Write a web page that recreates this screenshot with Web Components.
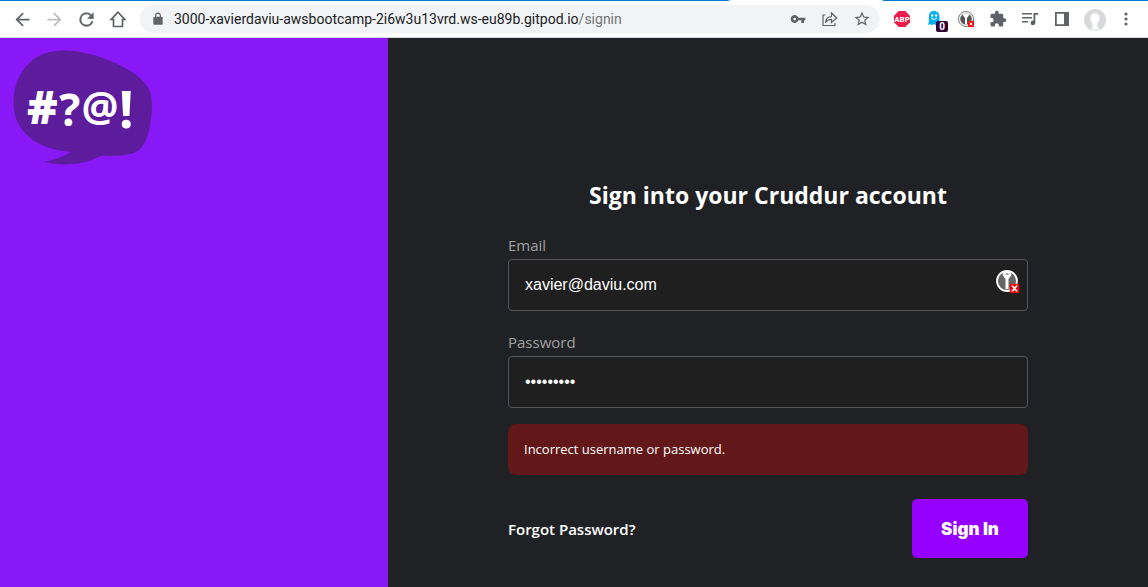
<!DOCTYPE html>
<html lang="en">
<head>
<meta charset="utf-8">
<title>Cruddur</title>
<style>
html, body { height: 100%; }
body { margin: 0; display: flex; flex-direction: column; background: #202124; font-family: "Open Sans", "Noto Sans", sans-serif; }
sign-in-page { flex: 1; }
</style>
</head>
<body>
<browser-bar></browser-bar>
<sign-in-page></sign-in-page>

<template id="bar-template">
<style>
:host { display: block; background: #fff; border-bottom: 1px solid #d9dadd; color: #5f6368; }
.tabline { height: 1px; background: linear-gradient(90deg, #0078d7 0 63.4%, #fff 63.6% 76.8%, #0078d7 77%); }
nav { display: flex; align-items: center; height: 36px; padding: 0 12px; }
.group { display: flex; align-items: center; gap: 12px; }
button { all: unset; display: grid; place-items: center; width: 20px; height: 20px; }
svg { display: block; fill: currentColor; overflow: visible; }
.off { color: #bbbdc0; }
.address { flex: 1; min-width: 0; display: flex; align-items: center; height: 28px; margin: 0 12px; padding: 0 8px; border-radius: 14px; background: #f1f3f4; }
.address > svg { margin: 0 9px 0 3px; }
.url { flex: 1; min-width: 0; white-space: nowrap; overflow: hidden; font-family: Roboto, sans-serif; font-size: 14px; line-height: 20px; color: #202124; }
.url span { color: #70757a; }
</style>
<div class="tabline"></div>
<nav aria-label="Browser">
  <div class="group">
    <button aria-label="Back"><svg width="21" height="21" viewBox="0 0 24 24"><path d="M20 11H7.830l5.590-5.590L12 4l-8 8 8 8 1.410-1.410L7.830 13H20z"/></svg></button>
    <button class="off" aria-label="Forward"><svg width="21" height="21" viewBox="0 0 24 24"><path d="M12 4l-1.410 1.410L16.170 11H4v2h12.170l-5.580 5.590L12 20l8-8z"/></svg></button>
    <button aria-label="Reload"><svg width="21" height="21" viewBox="0 0 24 24"><path d="M17.650 6.350A7.960 7.960 0 0 0 12 4a8 8 0 1 0 7.730 10h-2.080A6 6 0 1 1 12 6c1.660 0 3.140.69 4.220 1.780L13 11h7V4z" stroke="currentColor" stroke-width=".3"/></svg></button>
    <button aria-label="Home"><svg width="20" height="20" viewBox="0 0 20 20"><path d="M10 3.200 3.200 10.500H5.500v7h9v-7h2.300z" fill="none" stroke="currentColor" stroke-width="1.700"/></svg></button>
  </div>
  <div class="address">
    <svg width="14" height="14" viewBox="0 0 24 24"><path d="M18 8h-1V6A5 5 0 0 0 7 6v2H6a2 2 0 0 0-2 2v10c0 1.100.9 2 2 2h12a2 2 0 0 0 2-2V10a2 2 0 0 0-2-2zM9 6a3 3 0 0 1 6 0v2H9z"/></svg>
    <div class="url">3000-xavierdaviu-awsbootcamp-2i6w3u13vrd.ws-eu89b.gitpod.io<span>/signin</span></div>
    <div class="group">
      <button aria-label="Passwords"><svg width="16" height="16" viewBox="0 0 24 24"><path d="M12.650 10A6 6 0 1 0 12.650 14H17v4h4v-4h2v-4zM7 14a2 2 0 1 1 0-4 2 2 0 0 1 0 4z"/></svg></button>
      <button aria-label="Share"><svg width="18" height="18" viewBox="0 0 18 18"><g fill="none" stroke="currentColor" stroke-width="1.200"><path d="M4.500 5H2v10.500h12V13"/><path d="M10.500 6.500V3l5.300 5-5.300 4.500V9.300c-3 0-4.700 1-6 3.400.3-3.500 2.300-6 6-6.200z"/></g></svg></button>
      <button aria-label="Bookmark"><svg width="18" height="18" viewBox="0 0 24 24"><path d="M22 9.240l-7.190-.62L12 2 9.190 8.630 2 9.240l5.460 4.730L5.820 21 12 17.270 18.180 21l-1.630-7.030zM12 15.400l-3.760 2.270 1-4.280-3.320-2.880 4.380-.38L12 6.100l1.710 4.040 4.380.38-3.320 2.880 1 4.280z"/></svg></button>
    </div>
  </div>
  <div class="group">
    <button aria-label="Adblock Plus"><svg width="16" height="16" viewBox="0 0 16 16"><path d="M4.700 0h6.600L16 4.700v6.600L11.300 16H4.700L0 11.300V4.700z" fill="#ee1c4e"/><text x="8" y="11" text-anchor="middle" font-family="Roboto, sans-serif" font-size="8" font-weight="700" fill="#fff">ABP</text></svg></button>
    <button aria-label="Ghostery"><svg width="20" height="20" viewBox="0 0 20 20"><path d="M10 2c3.500 0 5.500 2.300 5.500 5.500V15l-2-1-2 2-2-1-2 1.500-1-1.500-2.500 1 1-4V7.500C5 4.300 6.500 2 10 2z" fill="#00aef0"/><circle cx="8.200" cy="6.500" r="1.200" fill="#fff"/><circle cx="12.200" cy="6.500" r="1.200" fill="#fff"/><path d="M7 9q3 3 6 0" stroke="#fff" fill="none"/><rect x="12" y="12" width="12" height="11" rx="2" fill="#330033"/><text x="18" y="21" text-anchor="middle" font-family="Roboto, sans-serif" font-size="10" font-weight="700" fill="#fff">0</text></svg></button>
    <button aria-label="Key manager"><svg width="16" height="16" viewBox="0 0 16 16"><circle cx="8" cy="8" r="7.500" fill="#fff" stroke="#777"/><circle cx="8" cy="8" r="5.800" fill="#555"/><path d="M5.500 2.500h5l.5 2-2 2.500v6.500H7V7L5 4.500z" fill="#fff"/><rect x="10" y="10" width="6" height="6" fill="#f00"/><path d="M11.500 11.500l3 3m0-3l-3 3" stroke="#fff"/></svg></button>
    <button aria-label="Extensions"><svg width="18" height="18" viewBox="0 0 24 24"><path d="M20.500 11H19V7a2 2 0 0 0-2-2h-4V3.500a2.500 2.500 0 0 0-5 0V5H4a2 2 0 0 0-2 2v3.800h1.500a2.700 2.700 0 0 1 0 5.400H2V20c0 1.100.9 2 2 2h3.800v-1.500a2.700 2.700 0 0 1 5.400 0V22H17a2 2 0 0 0 2-2v-4h1.500a2.500 2.500 0 0 0 0-5z"/></svg></button>
    <button aria-label="Media"><svg width="18" height="18" viewBox="0 0 18 18"><path d="M1 3h10v1.600H1zM1 7h10v1.600H1zM1 11h6v1.600H1zM12.500 3H17v1.700h-2.700v8.100a2.300 2.300 0 1 1-1.800-2.200z"/></svg></button>
    <button aria-label="Side panel"><svg width="14" height="14" viewBox="0 0 14 14"><path d="M0 0h14v14H0zM1.800 1.800v10.400H9V1.800z" fill-rule="evenodd"/></svg></button>
    <button aria-label="Profile"><svg width="22" height="22" viewBox="0 0 22 22"><circle cx="11" cy="11" r="11" fill="#d8d8d8"/><path d="M11 4c3 0 4.500 2 4.500 5s-1.300 4.500-2.500 5.500c0 2 .5 4 2.500 5.500-3 1.500-6.500 1.500-8.500.5 1.800-1.500 1.700-3.500 1.500-6C7.200 13.500 6.500 12 6.500 9S8 4 11 4z" fill="#fff" stroke="#e8edf2"/></svg></button>
    <button aria-label="Menu"><svg width="20" height="20" viewBox="0 0 20 20"><circle cx="10" cy="5" r="1.600"/><circle cx="10" cy="10" r="1.600"/><circle cx="10" cy="15" r="1.600"/></svg></button>
  </div>
</nav>
</template>

<template id="page-template">
<style>
:host { display: flex; }
aside { flex: 0 0 388px; box-sizing: border-box; padding: 12px; background: #8818f5; }
main { flex: 1; display: flex; justify-content: center; align-items: flex-start; padding: 141px 32px 28px; background: #202124; }
sign-in-form { flex: 0 1 520px; }
</style>
<aside><cruddur-logo></cruddur-logo></aside>
<main><sign-in-form></sign-in-form></main>
</template>

<template id="logo-template">
<style>
:host { display: block; }
svg { display: block; }
text { font-family: "Open Sans", sans-serif; font-weight: 800; fill: #fff; }
</style>
<svg width="143" height="117" viewBox="0 0 142 116" role="img" aria-label="Cruddur">
  <path d="M50 .5C76 0 112 14 127 28c10 9 12 15 12 29-1 20-5 37-14 43-10 6-23 5-37 5-15 9-38 11-56 6 12-2 20-6 27-10C36 100 12 90 4 68-2 48 3 27 17 13 26 4 37 1 50 .5z" fill="#5c1c9b"/>
  <text><tspan x="15" y="73" font-size="46">#</tspan><tspan x="47" y="75" font-size="44" font-weight="700">?</tspan><tspan x="69" y="71" font-size="41" font-weight="700">@</tspan><tspan x="106" y="77" font-size="52" font-weight="700">!</tspan></text>
</svg>
</template>

<template id="form-template">
<style>
:host { display: block; }
form { display: flex; flex-direction: column; }
h2 { margin: 0 0 23px; color: #fff; font-size: 23px; line-height: 32px; font-weight: 700; text-align: center; white-space: nowrap; }
.fields { display: grid; gap: 20px; }
.error { margin-top: 16px; padding: 16px; border-radius: 8px; background: #621718; color: #fff; font-size: 13px; line-height: 19px; }
.submit { display: flex; align-items: center; justify-content: space-between; margin-top: 24px; }
a { color: #fff; font-size: 15px; line-height: 20px; font-weight: 600; text-decoration: none; }
button { width: 116px; height: 59px; padding: 0; border: 0; border-radius: 5px; background: #9500ff; color: #fff; font: 900 17px/20px Inter, sans-serif; }
</style>
<form>
  <h2>Sign into your Cruddur account</h2>
  <div class="fields">
    <form-field label="Email" type="text" value="xavier@daviu.com">
      <svg width="24" height="24" viewBox="0 0 24 24" aria-hidden="true"><circle cx="11" cy="11" r="10" fill="#666" stroke="#fff" stroke-width="1.800"/><path d="M8 2h6l1.500 3-3 4v10h-3V9l-3-4z" fill="#fff"/><path d="M9.500 4h3" stroke="#555"/><path d="M14 14h9v9h-9z" fill="#f00"/><path d="M16 15.500l5 6m0-6l-5 6" stroke="#fff" stroke-width="1.600"/></svg>
    </form-field>
    <form-field label="Password" type="password" value="cruddur12"></form-field>
  </div>
  <div class="error" role="alert">Incorrect username or password.</div>
  <div class="submit"><a href="#forgot">Forgot Password?</a><button type="button">Sign In</button></div>
</form>
</template>

<template id="field-template">
<style>
:host { display: flex; flex-direction: column; gap: 3px; }
label { color: #a0a0a0; font-size: 15px; line-height: 22px; }
.box { position: relative; }
input { display: block; box-sizing: border-box; width: 100%; height: 52px; padding: 0 16px; border: 1px solid #555; border-radius: 4px; background: #1f1f1f; color: #fff; font: 16px "Liberation Sans", sans-serif; outline: 0; }
::slotted(svg) { position: absolute; right: 8px; top: 11px; }
</style>
<label for="input"></label>
<div class="box"><input id="input"><slot></slot></div>
</template>

<script>
function define(name, templateId, setup) {
  customElements.define(name, class extends HTMLElement {
    constructor() {
      super();
      const root = this.attachShadow({ mode: "open" });
      root.append(document.getElementById(templateId).content.cloneNode(true));
    }
    connectedCallback() {
      if (setup) setup(this, this.shadowRoot);
    }
  });
}
define("form-field", "field-template", (host, root) => {
  const input = root.querySelector("input");
  root.querySelector("label").textContent = host.getAttribute("label");
  input.type = host.getAttribute("type");
  input.value = host.getAttribute("value");
});
define("sign-in-form", "form-template");
define("cruddur-logo", "logo-template");
define("sign-in-page", "page-template");
define("browser-bar", "bar-template");
</script>
</body>
</html>
